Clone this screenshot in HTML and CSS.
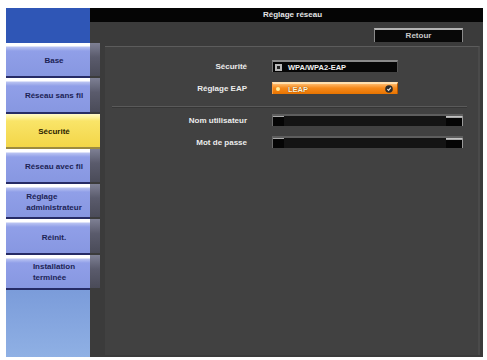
FILE: index.html
```html
<!DOCTYPE html>
<html>
<head>
    <title>Réglage réseau</title>
    <link rel="stylesheet" href="styles.css">
</head>
<body>
    <div class="screen">
        <div class="side">
            <div class="side-top">
                <div class="logo"></div>
                <div class="corner"></div>
            </div>
            <div class="nav-btn"><span>Base</span></div>
            <div class="nav-btn"><span>Réseau sans fil</span></div>
            <div class="nav-btn active"><span>Sécurité</span></div>
            <div class="nav-btn"><span>Réseau avec fil</span></div>
            <div class="nav-btn"><span>Réglage<br>administrateur</span></div>
            <div class="nav-btn"><span>Réinit.</span></div>
            <div class="nav-btn"><span>Installation<br>terminée</span></div>
            <div class="side-fill"></div>
        </div>
        <div class="main">
            <div class="titlebar">Réglage réseau</div>
            <div class="content">
                <div class="toolbar">
                    <div class="back-btn">Retour</div>
                </div>
                <div class="panel">
                    <div class="form">
                        <div class="label">Sécurité</div>
                        <div class="select">
                            <span class="sel-icon"></span>
                            <span class="sel-text">WPA/WPA2-EAP</span>
                        </div>
                        <div class="label">Réglage EAP</div>
                        <div class="select focus">
                            <span class="sel-dot"></span>
                            <span class="sel-text">LEAP</span>
                            <span class="sel-ok">
                                <svg width="8" height="8" viewBox="0 0 8 8">
                                    <circle cx="4" cy="4" r="3.8" fill="#2a2a2a"/>
                                    <path d="M2.3 4.1 L3.6 5.3 L5.8 2.6" stroke="#e8e8e8" stroke-width="1.2" fill="none"/>
                                </svg>
                            </span>
                        </div>
                    </div>
                    <div class="sep"></div>
                    <div class="form">
                        <div class="label">Nom utilisateur</div>
                        <div class="input"><span class="in-left"></span><span class="in-right"></span></div>
                        <div class="label">Mot de passe</div>
                        <div class="input"><span class="in-left"></span><span class="in-right"></span></div>
                    </div>
                </div>
            </div>
        </div>
    </div>
</body>
</html>
```

FILE: styles.css
```css
body {
    margin: 0;
    background-color: #ffffff;
    font-family: "Liberation Sans", Arial, sans-serif;
    font-weight: bold;
    font-size: 8px;
}
.screen {
    display: flex;
    width: 477px;
    height: 349px;
    margin: 8px 0 0 6px;
    background-color: #3b3b3b;
}
.side {
    width: 94px;
    display: flex;
    flex-direction: column;
}
.side-top {
    display: flex;
    height: 35px;
}
.logo {
    width: 84px;
    background-color: #2f56b6;
}
.corner {
    width: 10px;
    background: linear-gradient(#050505 0, #050505 14px, #3b3b3b 14px);
}
.nav-btn {
    height: 35.3px;
    display: flex;
    align-items: center;
    justify-content: center;
    color: #1c2356;
    line-height: 11px;
    background:
        linear-gradient(#7e8094 0, #5a5b6c 40%, #4a4b58 calc(100% - 2px), #3b3b3b calc(100% - 2px)) right top / 10px 100% no-repeat,
        linear-gradient(#ffffff 0, #ffffff 3px, #b9c3f2 4px, #909fe8 8px, #8797e1 calc(100% - 2px), #262b66 calc(100% - 2px)) left top / 84px 100% no-repeat;
}
.nav-btn span {
    display: inline-block;
    text-align: left;
    padding-left: 2px;
}
.nav-btn.active {
    color: #2a2200;
    background: linear-gradient(#fff9c8 0, #fff3a0 3px, #f9e468 7px, #f3d648 calc(100% - 2px), #9c8a40 calc(100% - 2px));
}
.side-fill {
    flex: 1;
    background:
        linear-gradient(#3b3b3b, #3b3b3b) right top / 10px 100% no-repeat,
        linear-gradient(#7b9cda, #8fb0e4) left top / 84px 100% no-repeat;
}
.main {
    flex: 1;
    display: flex;
    flex-direction: column;
}
.titlebar {
    height: 14px;
    line-height: 14px;
    background-color: #050505;
    color: #e4e4e4;
    text-align: center;
    padding-left: 2px;
}
.content {
    flex: 1;
    display: flex;
    flex-direction: column;
    padding: 6px 3px 2px 5px;
}
.toolbar {
    display: flex;
    justify-content: flex-end;
    padding-right: 17px;
}
.back-btn {
    width: 87px;
    height: 12px;
    line-height: 12px;
    background-color: #080808;
    border-top: 2px solid #b4b4b4;
    border-left: 1px solid #8a8a8a;
    border-right: 1px solid #8a8a8a;
    color: #c8c8c8;
    text-align: center;
}
.panel {
    flex: 1;
    margin-top: 4px;
    background-color: #414141;
    border-top: 1px solid #5c5c5c;
    border-right: 2px solid #4a4a4a;
    padding-top: 13px;
}
.form {
    display: grid;
    grid-template-columns: 142px auto;
    column-gap: 25px;
    row-gap: 10px;
    align-items: center;
}
.label {
    text-align: right;
    color: #ececec;
}
.select {
    width: 124px;
    height: 10px;
    display: flex;
    align-items: center;
    background-color: #060606;
    border-top: 2px solid #8a8a8a;
    border-left: 1px solid #777;
    border-right: 1px solid #555;
    color: #f0f0f0;
}
.sel-icon {
    width: 7px;
    height: 7px;
    margin: 0 6px 0 2px;
    background: radial-gradient(circle, #222 0, #222 1.5px, #b8b8b8 2px);
}
.sel-text {
    flex: 1;
    font-size: 7.5px;
}
.select.focus {
    background: linear-gradient(#ffb868 0, #f68a1c 40%, #e87400 100%);
    border-top: 2px solid #ffe0b0;
    border-left: 1px solid #ffa040;
    border-right: 1px solid #b85800;
    color: #fff4dc;
    text-shadow: 0 0 1px #5a2800;
}
.sel-dot {
    width: 4px;
    height: 4px;
    margin: 0 8px 0 3px;
    border-radius: 2px;
    background-color: #fff0a0;
}
.sel-ok {
    display: flex;
    margin-right: 4px;
}
.sep {
    height: 0;
    margin: 12px 11px 6px 7px;
    border-top: 1px solid #5a5a5a;
    border-bottom: 1px solid #363636;
}
.input {
    width: 190px;
    height: 10px;
    display: flex;
    justify-content: space-between;
    background-color: #141414;
    border-top: 2px solid #5e5e5e;
    border-left: 1px solid #6a6a6a;
}
.in-left {
    width: 11px;
    background: linear-gradient(#a8a8a8 0, #a8a8a8 1px, #050505 1px);
}
.in-right {
    width: 16px;
    background: linear-gradient(#d0d0d0 0, #9a9a9a 2px, #050505 2px);
    border-right: 1px solid #9a9a9a;
}
```
